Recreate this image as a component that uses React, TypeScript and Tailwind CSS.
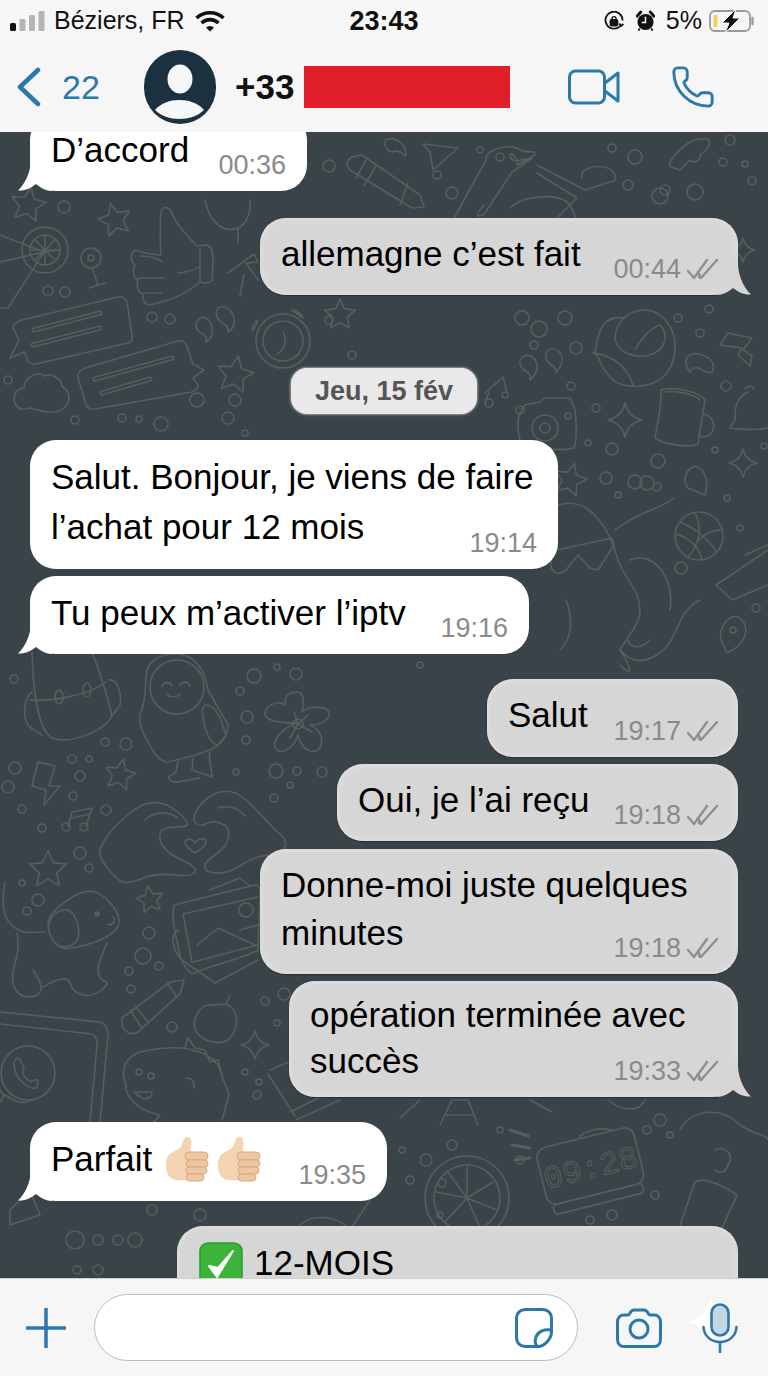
import type { ReactNode } from 'react'
import { Phone } from 'lucide-react'

function starPoints(cx: number, cy: number, r: number, rot = 0) {
  const pts: string[] = []
  for (let i = 0; i < 10; i++) {
    const rad = i % 2 === 0 ? r : r * 0.48
    const a = ((rot - 90 + i * 36) * Math.PI) / 180
    pts.push(`${(cx + rad * Math.cos(a)).toFixed(1)},${(cy + rad * Math.sin(a)).toFixed(1)}`)
  }
  return pts.join(' ')
}

function sparkle(cx: number, cy: number, r: number) {
  const s = r * 0.18
  return `M${cx} ${cy - r}Q${cx + s} ${cy - s} ${cx + r} ${cy}Q${cx + s} ${cy + s} ${cx} ${cy + r}Q${cx - s} ${cy + s} ${cx - r} ${cy}Q${cx - s} ${cy - s} ${cx} ${cy - r}Z`
}

// rounds a list of points off through their midpoints
function smooth(pts: number[][], closed = false) {
  const mid = (a: number[], b: number[]) => `${(a[0] + b[0]) / 2} ${(a[1] + b[1]) / 2}`
  if (closed) {
    let d = `M${mid(pts[pts.length - 1], pts[0])}`
    pts.forEach((p, i) => {
      d += `Q${p[0]} ${p[1]} ${mid(p, pts[(i + 1) % pts.length])}`
    })
    return d + 'Z'
  }
  let d = `M${pts[0][0]} ${pts[0][1]}`
  for (let i = 1; i < pts.length - 1; i++) d += `Q${pts[i][0]} ${pts[i][1]} ${mid(pts[i], pts[i + 1])}`
  const last = pts[pts.length - 1]
  return d + `L${last[0]} ${last[1]}`
}

const LEFT_HAND = [[98, 850], [113, 827], [143, 802], [167, 803], [187, 820], [188, 827], [163, 827], [158, 838], [167, 853], [197, 867], [193, 877], [157, 873], [133, 882], [120, 883], [103, 863]]
const RIGHT_HAND = [[192, 820], [200, 803], [220, 790], [240, 793], [263, 817], [275, 830], [287, 840], [283, 853], [253, 857], [230, 873], [207, 873], [203, 863], [227, 847], [230, 827], [213, 820], [200, 827]]
const DOG_HEAD = [[57, 907], [83, 890], [103, 893], [123, 920], [110, 937], [80, 947], [57, 950], [45, 923]]
const DOG_EAR = [[55, 912], [70, 908], [80, 927], [77, 945], [57, 948], [46, 927]]
const DOG_BODY = [[5, 882], [0, 910], [17, 933], [45, 932]]
const DOG_BACK = [[17, 933], [20, 947], [10, 980], [20, 997], [37, 997], [43, 987], [33, 970]]
const DOG_FRONT = [[43, 987], [67, 973], [73, 993], [93, 997], [110, 983], [100, 980], [97, 967], [107, 943]]

const STARS: [number, number, number, number][] = [
  [28, 205, 18, 10], [115, 220, 17, -15], [235, 375, 19, 10], [340, 315, 16, 0], [570, 480, 17, 15],
  [120, 775, 16, 12], [48, 870, 19, 0], [150, 900, 14, -10],
]

const SPARKLES: [number, number, number][] = [
  [625, 420, 17], [743, 463, 14], [255, 1045, 14], [743, 250, 12],
]

// loose little bubbles scattered between the doodles
const DOTS: [number, number, number][] = [
  [64, 207, 6], [48, 291, 5], [65, 292, 5], [152, 317, 5], [170, 319, 5], [329, 320, 4], [352, 355, 4], [8, 380, 4],
  [197, 400, 7], [235, 400, 6], [228, 418, 6], [245, 433, 3], [122, 418, 4], [139, 419, 3], [75, 420, 4], [161, 424, 7],
  [14, 679, 4], [254, 676, 7], [240, 691, 4], [277, 667, 3], [296, 674, 6], [247, 717, 6], [246, 740, 4], [105, 742, 4],
  [126, 744, 6], [89, 759, 3], [72, 759, 4], [15, 768, 6], [8, 787, 6], [80, 776, 5], [73, 796, 4], [106, 810, 5], [42, 828, 4],
  [22, 809, 4], [80, 853, 6], [89, 868, 4], [22, 883, 3], [38, 900, 6], [27, 911, 4], [149, 933, 6], [143, 956, 8],
  [129, 971, 4], [159, 966, 4], [131, 989, 4], [172, 1027, 5], [265, 1001, 4], [284, 994, 6], [277, 1023, 3], [245, 1072, 3],
  [259, 1082, 3], [257, 1095, 4], [236, 772, 3], [276, 771, 7], [297, 771, 4], [322, 772, 5], [290, 785, 3], [274, 798, 4],
  [522, 318, 7], [539, 329, 8], [534, 345, 4], [565, 318, 7], [576, 348, 6], [678, 318, 4], [709, 309, 4], [700, 333, 4],
  [571, 386, 4], [520, 410, 4], [596, 408, 4], [588, 443, 3], [612, 449, 6], [658, 461, 7], [647, 483, 7], [606, 478, 6],
  [635, 482, 7], [657, 487, 4], [618, 495, 3], [726, 386, 5], [715, 450, 3], [764, 446, 3], [727, 498, 3], [740, 528, 3],
  [681, 568, 6], [756, 608, 4], [420, 665, 3], [730, 140, 5], [612, 148, 4], [635, 157, 7], [665, 190, 5], [628, 185, 5],
  [723, 162, 4], [745, 164, 3], [752, 181, 4], [329, 166, 6], [437, 175, 4], [480, 150, 3], [500, 157, 4], [452, 193, 6],
  [660, 196, 8], [695, 192, 8], [442, 1183, 4], [402, 1150, 3], [410, 1180, 4], [426, 1160, 6], [452, 1145, 5], [440, 1215, 3],
  [500, 1130, 3], [520, 1160, 4], [660, 1120, 6], [647, 1130, 4], [670, 1135, 3], [655, 1195, 4], [590, 1220, 4], [612, 1215, 5],
  [75, 1240, 9], [98, 1240, 5], [118, 1240, 5], [135, 1240, 7], [152, 1210, 5], [77, 1270, 4], [98, 1270, 5], [200, 1215, 6],
]

function Doodles() {
  return (
    <svg viewBox="0 132 768 1146" className="absolute inset-0 h-full w-full" fill="none" stroke="#565e61" strokeWidth="1.6" strokeLinecap="round" strokeLinejoin="round">
      {DOTS.map(([x, y, r], i) => <circle key={i} cx={x} cy={y} r={r} />)}
      {STARS.map(([x, y, r, rot], i) => <polygon key={i} points={starPoints(x, y, r, rot)} />)}
      {SPARKLES.map(([x, y, r], i) => <path key={i} d={sparkle(x, y, r)} />)}

      {/* drink */}
      <path d="M0 235L44 252L0 262M44 252L8 308H0M44 252L60 250" />
      <circle cx="45" cy="250" r="23" /><circle cx="45" cy="250" r="15" />
      <path d="M30 250H60M45 235V265M35 240L55 260M55 240L35 260" />
      {/* wine glass */}
      <circle cx="91" cy="258" r="10" /><circle cx="91" cy="258" r="3" /><path d="M92 268L98 285M89 288L105 283" />
      {/* mic stand */}
      <path d="M205 200C210 225 225 233 238 228C247 224 251 212 250 200M238 228L238 243" />
      {/* thumb */}
      <path d="M161 212C162 205 170 207 172 213C176 226 190 238 197 246L207 245C212 246 213 252 213 262L212 280C210 284 204 283 200 282C190 290 178 298 165 301L150 305C143 305 143 298 143 294C137 292 136 284 138 280C133 278 132 270 135 265C130 260 130 255 135 250C140 252 155 255 161 255C160 250 160 220 161 212ZM200 248L200 282M178 273C188 272 195 270 200 266M140 256C148 256 158 258 162 262M138 278H164M144 293H162" />
      <path d="M228 273L254 254L258 262L246 263L258 280M244 274L240 296" />
      {/* chat bubbles */}
      <path d="M22 320L118 297C122 296 126 298 127 302L132 336C133 340 131 342 128 343L36 364C32 365 28 363 27 359L24 352L10 358L19 340L13 328C13 324 18 321 22 320Z" />
      <path d="M34 330L100 313M33 345L100 328" strokeWidth="5" />
      <path d="M34 330L100 313M33 345L100 328" strokeWidth="2" stroke="#3a4347" />
      <path d="M85 368L178 341C182 340 186 342 187 346L193 364L204 370L193 378L198 385C198 389 195 391 192 392L95 409C91 410 87 408 86 404L78 378C77 373 80 370 85 368Z" />
      <path d="M95 379L172 358M102 393L150 379" strokeWidth="5" />
      <path d="M95 379L172 358M102 393L150 379" strokeWidth="2" stroke="#3a4347" />
      {/* quotes */}
      <path d="M198 320C200 315 210 317 212 327C213 335 210 340 206 342C208 335 203 335 200 332C195 328 195 323 198 320ZM218 308C222 305 232 308 234 318C235 326 232 330 228 332C229 325 224 325 221 322C216 318 215 312 218 308Z" />
      <path d="M522 358C525 353 535 355 537 365C538 372 533 378 530 380C532 372 525 372 523 369C519 365 519 361 522 358ZM548 350C552 347 561 350 562 358C563 366 558 369 556 373C557 366 550 365 548 362C545 358 545 353 548 350Z" />
      {/* clock */}
      <circle cx="283" cy="341" r="27" /><circle cx="283" cy="341" r="20" />
      <path d="M283 332C287 340 286 348 277 354M256 325L253 331C251 327 254 322 258 320ZM292 310C297 311 301 313 303 318Z" />
      {/* cloud */}
      <path d="M24 388C24 378 38 370 44 376C52 372 62 380 62 386C70 392 72 400 64 408C56 416 38 410 30 408C20 412 14 406 14 398C14 392 20 388 24 388Z" />
      {/* pencil top */}
      <path d="M352 157L362 155L420 195L424 207L412 208L350 170C345 165 347 160 352 157ZM366 160L356 178M376 166L364 186M408 183L400 205" />
      {/* arrow */}
      <path d="M423 144L458 148L433 170L430 152Z" />
      <path d="M385 145C382 138 394 136 402 144C406 148 407 155 405 156C403 152 396 150 392 152C388 152 386 148 385 145Z" />
      {/* bike */}
      <path d="M510 208C523 195 560 192 570 205C577 218 578 224 578 240M453 220L486 160C484 150 510 142 520 150C530 155 535 148 535 155L517 165C518 158 510 150 510 156C512 165 525 158 532 158L512 172L485 213C480 218 472 218 484 205M537 165L585 190L610 182C620 182 615 170 605 167C590 165 580 170 582 178M537 173L577 198L549 226" />
      {/* key */}
      <path d="M670 162C680 145 700 135 702 140C710 135 715 145 700 155C702 158 695 165 690 160L680 170C676 168 668 168 670 162Z" />
      {/* backpack */}
      <path d="M32 652C33 690 38 730 52 738C72 745 105 730 112 716C106 690 97 665 92 652" />
      <path d="M32 692C24 698 22 715 28 725C32 730 38 732 42 735M108 680C118 678 122 695 120 705L112 716M30 700C50 702 90 695 106 682" />
      <ellipse cx="59" cy="697" rx="4" ry="7" /><ellipse cx="87" cy="690" rx="4" ry="7" />
      {/* astronaut */}
      <path d="M146 680C145 660 160 654 176 654C195 654 205 670 208 690L228 725C228 745 210 750 196 755L168 762C158 762 152 750 147 740C140 730 138 715 142 710C146 695 145 690 146 680Z" />
      <circle cx="177" cy="687" r="27" />
      <path d="M162 686C165 681 170 682 172 686M180 685C183 681 188 681 190 686M167 694C170 698 176 698 180 694M205 705C215 705 220 715 226 735L218 745C210 745 205 730 203 718C202 710 202 707 205 705ZM178 762L176 772L172 775C165 776 170 783 178 782L200 778M193 758L192 770L212 777C210 755 208 760 210 752" />
      {/* flower */}
      <path d="M297 722C284 725 266 720 265 715C264 705 278 700 285 705C284 695 290 692 297 692C305 692 304 705 302 712C310 705 328 706 329 713C329 722 318 725 310 725C322 730 325 742 318 750C308 755 300 745 298 735C295 745 285 755 277 750C270 742 280 730 297 722Z" />
      <circle cx="298" cy="724" r="5" /><path d="M294 712L298 724M308 715L298 724M312 732L298 724M290 738L298 724M284 722L298 724" />
      {/* bolt */}
      <path d="M38 762L55 766L49 786L60 786L44 805L46 790L32 786Z" />
      <path d="M728 333L752 338L743 350L752 356L750 366L738 355L742 348L720 345Z" />
      {/* music */}
      <path d="M72 812L92 808L86 826M72 812L68 826M72 818L90 814" />
      <circle cx="66" cy="827" r="4" /><circle cx="84" cy="827" r="4" />
      <path d="M485 393L503 377L507 392M489 392L485 403" /><circle cx="489" cy="403" r="4" /><circle cx="505" cy="395" r="3" />
      {/* heart hands */}
      <path d={smooth(LEFT_HAND, true)} />
      <path d={smooth(RIGHT_HAND, true)} />
      <path d="M145 820C155 810 170 812 178 818M218 808C228 805 238 808 245 816" />
      <path d="M195 843C190 836 185 840 185 843C186 847 191 850 195 853C200 850 206 846 206 842C206 838 199 837 195 843Z" />
      {/* dog */}
      <path d={smooth(DOG_HEAD, true)} />
      <path d={smooth(DOG_EAR, true)} />
      <path d={smooth(DOG_BODY)} />
      <path d={smooth(DOG_BACK)} />
      <path d={smooth(DOG_FRONT)} />
      <path d="M108 925C114 925 116 920 113 917" />
      <circle cx="97" cy="914" r="2" fill="#565e61" />
      {/* photo */}
      <path d="M174 905L255 885C258 885 260 888 260 892L258 950C240 960 210 965 195 973C190 975 180 965 178 945C174 930 172 915 174 905ZM183 914L258 897M193 962L258 945M183 914L192 962M197 945L218 928L255 945M240 930L258 925M178 930C170 935 172 950 182 960L215 983L258 960M210 890L240 878L250 886" />
      <circle cx="246" cy="910" r="7" />
      {/* crayon */}
      <path d="M122 1018L170 982L184 980L180 994L138 1032C132 1036 125 1032 122 1026ZM130 1010L142 1028M135 1006L148 1022M168 984L176 996" />
      {/* apple */}
      <path d="M208 1005C196 1008 190 1025 198 1034C204 1042 220 1045 228 1040C238 1030 240 1015 230 1006C222 1002 216 1006 208 1005ZM226 1004L230 996" />
      {/* whatsapp tablet */}
      <path d="M0 1012L100 1022C106 1024 108 1028 108 1035L100 1122M0 1024L92 1034C97 1036 97 1042 97 1045L90 1122" />
      <circle cx="28" cy="1073" r="27" /><path d="M0 1090L4 1096L0 1102M5 1095C15 1102 26 1105 30 1100" />
      <path d="M14 1064C14 1058 20 1057 20 1060L24 1068C22 1072 22 1075 28 1080C34 1084 36 1078 38 1080L37 1088C30 1090 14 1080 14 1064Z" />
      {/* dino */}
      <path d="M126 1085C118 1065 130 1052 150 1050C178 1045 205 1048 218 1065L229 1095L222 1120M126 1085C125 1095 135 1110 160 1115C155 1122 150 1125 145 1125M185 1048L188 1038L195 1048L205 1050L210 1062L218 1060L222 1075M134 1092H152C152 1098 146 1100 142 1098Z" />
      <circle cx="139" cy="1072" r="3" /><circle cx="151" cy="1076" r="3" /><path d="M186 1078C192 1078 195 1082 194 1088" />
      {/* book corner */}
      <path d="M270 1070L305 1055M268 1074L295 1116M290 1112L335 1090M296 1120L340 1100" />
      {/* duck */}
      <path d="M595 355C598 320 610 316 625 318M615 340C615 320 630 310 645 310C662 310 675 328 675 345C676 370 660 385 640 386C620 388 608 382 597 355L592 352C605 355 625 360 633 385M615 340C620 356 640 358 650 355C665 350 670 335 660 325C650 328 640 340 635 350" />
      {/* swirl */}
      <path d="M690 372C680 358 690 352 700 354C712 358 716 365 712 372C705 375 700 366 695 368C692 368 690 372 690 372Z" />
      {/* camera */}
      <path d="M525 405L540 402L545 398H570L575 410C576 420 577 440 574 448C560 452 530 448 520 440C516 425 518 412 525 405Z" />
      <circle cx="545" cy="428" r="13" /><circle cx="545" cy="428" r="5" /><circle cx="568" cy="416" r="3" />
      {/* mug */}
      <path d="M661 390C675 386 700 392 705 400L698 444C690 448 665 445 655 438C658 420 662 405 661 390ZM665 392C675 390 695 394 700 400M703 414C712 415 716 425 712 432C708 438 700 438 699 434" />
      {/* bell */}
      <path d="M748 392C735 398 735 410 735 420L730 428C742 430 760 430 768 428M745 389C748 385 752 385 754 389" />
      {/* pin */}
      <path d="M695 466C685 470 682 480 688 488L705 495C708 485 708 470 695 466Z" />
      <path d="M732 617C722 622 718 635 722 642L727 653C738 648 745 640 746 630C745 620 738 615 732 617Z" /><circle cx="733" cy="630" r="3" />
      {/* basketball */}
      <circle cx="699" cy="536" r="24" />
      <path d="M680 522C695 528 710 540 716 552M695 513C702 525 700 545 688 557M676 534C690 538 700 548 702 560M722 530C712 530 702 535 695 545" />
      {/* octopus + glasses */}
      <path d="M558 505C590 495 610 530 618 560C625 580 640 590 640 610C640 625 625 640 620 650C635 668 655 660 668 645C680 628 680 610 700 600M615 530C640 510 660 510 674 498M620 650C630 665 635 680 620 665M566 600C575 625 570 640 560 650M630 560C655 550 675 580 670 610M650 640C640 650 630 648 628 640" />
      <path d="M548 552L612 538L614 545L598 570L590 568L578 555L566 570C555 578 548 570 552 555Z" />
      {/* shoe */}
      <path d="M716 585L768 550M716 585L732 600L768 585M745 555L768 545" />
      {/* gamepad + misc bottom */}
      <path d="M680 1130C690 1110 720 1105 740 1125C755 1135 768 1135 768 1140M715 1150C725 1145 735 1155 728 1165C725 1175 718 1172 715 1170" />
      {/* alarm clock */}
      <g transform="rotate(-14 590 1165)">
        <rect x="540" y="1137" width="100" height="58" rx="10" /><rect x="544" y="1195" width="92" height="10" rx="4" />
        <path d="M585 1137C590 1130 610 1130 620 1137" />
        <text x="590" y="1178" textAnchor="middle" fontFamily="Liberation Mono, monospace" fontSize="32" fill="none" stroke="#565e61" strokeWidth="1">09:28</text>
      </g>
      <path d="M510 1130L528 1136M512 1145L530 1148M515 1160L530 1158" strokeWidth="3" />
      {/* lemon */}
      <circle cx="467" cy="1198" r="42" /><circle cx="467" cy="1198" r="33" />
      <path d="M467 1198V1167M467 1198L493 1182M467 1198L497 1210M467 1198L480 1228M467 1198L445 1222M467 1198L436 1192M467 1198L448 1172" />
      {/* mug bottom */}
      <path d="M695 1182C705 1175 730 1190 737 1195L722 1228M695 1182L680 1225C690 1235 710 1240 722 1228" />
      {/* eiffel */}
      <path d="M452 1100L440 1125M452 1100L468 1100L478 1125M446 1115H474" />
      <path d="M400 1118L420 1100M530 1100L552 1112M608 1100C622 1112 640 1112 645 1100" />
      <path d="M270 1200L285 1150C300 1130 330 1140 340 1160M350 1230L370 1200M290 1240C300 1210 340 1210 360 1240M10 1210L30 1190L40 1215L10 1225Z" />
    </svg>
  )
}

function DoubleCheck() {
  return (
    <svg viewBox="0 0 32 22" className="ml-[6px] h-[22px] w-[32px]" fill="none" stroke="#8f8f8f" strokeWidth="2.4" strokeLinecap="round" strokeLinejoin="round">
      <path d="M1 13L7 20L20 2M12 19L14 20L30 2M11 14L14 20" />
    </svg>
  )
}

function Tail({ side }: { side: 'in' | 'out' }) {
  const fill = side === 'in' ? 'fill-white' : 'fill-[#d6d6d6]'
  return (
    <svg
      viewBox="0 0 34 36"
      className={`absolute bottom-0 h-[36px] w-[34px] ${fill} ${side === 'in' ? 'left-[-12px]' : 'right-[-13px] -scale-x-100'}`}
    >
      <path d="M13 0C14 14 8 28 0 35.500C7 36 13 33 18 29C23 33 28 36 34 36V0Z" />
    </svg>
  )
}

interface BubbleProps {
  side: 'in' | 'out'
  width: string
  spacing: string
  time: string
  tail?: boolean
  box?: string
  children: ReactNode
}

function Bubble({ side, width, spacing, time, tail, box = 'pt-[13px] pb-[18px] leading-[46px]', children }: BubbleProps) {
  const out = side === 'out'
  return (
    <div
      className={`relative shrink-0 rounded-[26px] pl-[21px] text-[35px] text-black ${box} ${width} ${spacing} ${
        out ? 'self-end bg-[#d6d6d6] shadow-[inset_0_0_6px_#e6e6e6,0_1px_1px_#2a3033]' : 'self-start bg-white'
      }`}
    >
      {tail && <Tail side={side} />}
      <div className="relative">{children}</div>
      <div className={`absolute bottom-[9px] flex items-center text-[27px] leading-[34px] text-[#8a8a8a] ${out ? 'right-[19px]' : 'right-[21px]'}`}>
        {time}
        {out && <DoubleCheck />}
      </div>
    </div>
  )
}

function ThumbEmoji() {
  return (
    <svg viewBox="0 0 44 46" className="h-[46px] w-[44px]">
      <path d="M21 1C26 0 27 5 26 10C25 14 26 16 28 17L30 42C20 45 8 46 4 40C0 34 0 26 3 20C5 17 12 14 15 12C18 8 18 3 21 1Z" fill="#f3d3b1" />
      <rect x="20" y="16" width="23" height="8" rx="4" fill="#ecc7a1" stroke="#d8a97e" strokeWidth="1" />
      <rect x="21" y="24" width="22" height="7" rx="3.500" fill="#ecc7a1" stroke="#d8a97e" strokeWidth="1" />
      <rect x="21" y="31" width="21" height="7" rx="3.500" fill="#ecc7a1" stroke="#d8a97e" strokeWidth="1" />
      <rect x="21" y="38" width="18" height="7" rx="3.500" fill="#ecc7a1" stroke="#d8a97e" strokeWidth="1" />
    </svg>
  )
}

function StatusBar() {
  return (
    <div className="grid h-[42px] grid-cols-3 items-center text-[25px] text-[#111]">
      <div className="flex items-center pl-[10px]">
        <svg viewBox="0 0 35 20" className="h-[20px] w-[35px]">
          <rect x="0" y="12" width="6" height="8" rx="1.500" fill="#111" />
          <rect x="9.500" y="8" width="6" height="12" rx="1.500" fill="#b5b5b5" />
          <rect x="19" y="4" width="6" height="16" rx="1.500" fill="#b5b5b5" />
          <rect x="28.500" y="0" width="6" height="20" rx="1.500" fill="#b5b5b5" />
        </svg>
        <span className="ml-[9px]">Béziers, FR</span>
        <svg viewBox="0 0 30 22" className="ml-[10px] h-[22px] w-[30px]" fill="none" stroke="#111" strokeWidth="3.600" strokeLinecap="butt">
          <path d="M1.500 8C9 1 21 1 28.500 8M6.500 13C11.500 8.500 18.500 8.500 23.500 13" />
          <path d="M11 17.500C13.500 15.500 16.500 15.500 19 17.500L15 21.500Z" fill="#111" stroke="none" />
        </svg>
      </div>
      <div className="text-center text-[27px] font-bold">23:43</div>
      <div className="flex items-center justify-end pr-[13px]">
        <svg viewBox="0 0 20 20" className="h-[20px] w-[20px]" fill="none" stroke="#111" strokeWidth="1.800">
          <path d="M17 14A8.500 8.500 0 1 1 18.500 9.500" />
          <path d="M15.500 12.500L17 15L19.500 13" />
          <rect x="6.500" y="9" width="7" height="5.500" rx="1" fill="#111" />
          <path d="M8 9V7.500C8 5 12 5 12 7.500V9" strokeWidth="1.400" />
        </svg>
        <svg viewBox="0 0 20 22" className="ml-[12px] h-[22px] w-[19px]">
          <circle cx="10" cy="12" r="8.500" fill="#111" />
          <path d="M1 6L5 1.500M19 6L15 1.500" stroke="#111" strokeWidth="3" strokeLinecap="round" />
          <path d="M10 6.500V12.500H6" stroke="#f6f6f6" strokeWidth="1.600" fill="none" />
          <path d="M4 19L2.500 21M16 19L17.500 21" stroke="#111" strokeWidth="2" />
        </svg>
        <span className="ml-[11px]">5%</span>
        <svg viewBox="0 0 46 24" className="ml-[7px] h-[24px] w-[46px]" fill="none">
          <rect x="1" y="2" width="40" height="20" rx="5" stroke="#9a9a9a" strokeWidth="1.800" />
          <rect x="4.500" y="6" width="4" height="12" rx="1" fill="#f2d060" />
          <path d="M43.500 9V15" stroke="#9a9a9a" strokeWidth="2.400" strokeLinecap="round" />
          <path d="M27 0L13 14H20L16 24L31 9H24Z" fill="#111" stroke="#f6f6f6" strokeWidth="1" />
        </svg>
      </div>
    </div>
  )
}

function NavBar() {
  return (
    <div className="flex h-[90px] items-center pl-[17px]">
      <svg viewBox="0 0 24 40" className="h-[40px] w-[24px]" fill="none" stroke="#2a79ab" strokeWidth="4.500" strokeLinecap="round" strokeLinejoin="round">
        <path d="M21 3L3 20L21 37" />
      </svg>
      <span className="ml-[21px] w-[38px] text-[34px] text-[#2a79ab]">22</span>
      <div className="ml-[44px] h-[74px] w-[72px] overflow-hidden rounded-full bg-[#1c3140]">
        <svg viewBox="0 0 72 74" className="h-full w-full" fill="#f4f6f7">
          <ellipse cx="36" cy="29" rx="12.500" ry="14.500" />
          <path d="M11 60C17 53 26 50 35 50C45 50 54 53 60 60C54 66 45 69 35 69C26 69 17 66 11 60Z" />
        </svg>
      </div>
      <span className="ml-[19px] w-[61px] text-[35px] font-bold text-[#111]">+33</span>
      <div className="ml-[8px] h-[42px] w-[206px] bg-[#e11f28]" />
      <svg viewBox="0 0 52 36" className="ml-[58px] h-[36px] w-[52px]" fill="none" stroke="#2a79ab" strokeWidth="3" strokeLinejoin="round">
        <rect x="1.500" y="2" width="35" height="32" rx="6" />
        <path d="M37 14L50 4V32L37 22" />
      </svg>
      <Phone className="ml-[50px] h-[46px] w-[46px] text-[#2a79ab]" strokeWidth={1.500} />
    </div>
  )
}

function Composer() {
  return (
    <div className="flex h-[98px] shrink-0 items-center border-t border-[#cfcfcf] bg-[#f6f6f6] pl-[26px]">
      <svg viewBox="0 0 40 40" className="h-[40px] w-[40px]" stroke="#2a79ab" strokeWidth="3.500" strokeLinecap="round">
        <path d="M20 1V39M1 20H39" />
      </svg>
      <div className="ml-[28px] flex h-[67px] w-[484px] items-center justify-end rounded-full border border-[#bdbdbd] bg-white pr-[24px]">
        <svg viewBox="0 0 38 40" className="h-[40px] w-[38px]" fill="none" stroke="#2a79ab" strokeWidth="3" strokeLinejoin="round">
          <path d="M11 1.500H27C33 1.500 36.500 5 36.500 11V24C36.500 30 30 38.500 23 38.500H11C5 38.500 1.500 35 1.500 29V11C1.500 5 5 1.500 11 1.500Z" />
          <path d="M36 22C30 21 23 23 21 29C20 32 20 36 22 38" />
        </svg>
      </div>
      <svg viewBox="0 0 46 40" className="ml-[38px] h-[40px] w-[46px]" fill="none" stroke="#2a79ab" strokeWidth="3">
        <path d="M8 7H12C14 7 14 2 18 2H28C32 2 32 7 34 7H38C42 7 44.500 10 44.500 14V31C44.500 35.500 42 38.500 38 38.500H8C4 38.500 1.500 35.500 1.500 31V14C1.500 10 4 7 8 7Z" />
        <circle cx="23" cy="21" r="9" />
      </svg>
      <div className="relative ml-[40px] h-[50px] w-[36px]">
        <svg viewBox="0 0 50 50" className="absolute left-[-16px] top-[-6px] h-[50px] w-[50px]" fill="#ffffff">
          <path d={sparkle(25, 25, 24)} />
        </svg>
        <svg viewBox="0 0 36 50" className="absolute inset-0 h-[50px] w-[36px]" fill="none" stroke="#2a79ab" strokeWidth="2.600" strokeLinecap="round">
          <rect x="9.500" y="1.500" width="17" height="31" rx="8.500" fill="#c3d7e5" />
          <path d="M1.500 24C2 33 9 39 18 39C27 39 34 33 34.500 24M18 39V49" />
        </svg>
      </div>
    </div>
  )
}

export default function App() {
  return (
    <div className="flex h-[1376px] w-[768px] flex-col overflow-hidden bg-[#f6f6f6] font-['Liberation_Sans',Arial,sans-serif]">
      <div className="shrink-0 bg-[#f6f6f6]">
        <StatusBar />
        <NavBar />
      </div>

      <div className="relative flex min-h-0 flex-1 flex-col overflow-hidden bg-[#3a4347] px-[30px]">
        <Doodles />
        <Bubble side="in" width="w-[277px]" spacing="mt-[-18px]" time="00:36" tail>D’accord</Bubble>
        <Bubble side="out" width="w-[478px]" spacing="mt-[27px]" time="00:44" tail>allemagne c’est fait</Bubble>
        <div className="relative mt-[73px] flex h-[46px] w-[186px] shrink-0 items-center justify-center self-center rounded-[16px] bg-[#e9e9e9] text-[27px] font-bold text-[#555] shadow-[0_0_3px_#f0f0f0]">
          Jeu, 15 fév
        </div>
        <Bubble side="in" width="w-[528px]" spacing="mt-[26px]" time="19:14" box="pt-[12px] pb-[17px] leading-[50px]">
          Salut. Bonjour, je viens de faire<br />l’achat pour 12 mois
        </Bubble>
        <Bubble side="in" width="w-[499px]" spacing="mt-[7px]" time="19:16" tail box="pt-[13px] pb-[19px] leading-[46px]">
          <span className="relative top-[1px]">Tu peux m’activer l’iptv</span>
        </Bubble>
        <Bubble side="out" width="w-[251px]" spacing="mt-[25px]" time="19:17" box="pt-[13px] pb-[19px] leading-[46px]">Salut</Bubble>
        <Bubble side="out" width="w-[401px]" spacing="mt-[7px]" time="19:18">Oui, je l’ai reçu</Bubble>
        <Bubble side="out" width="w-[478px]" spacing="mt-[8px]" time="19:18" box="pt-[12px] pb-[17px] leading-[48px]">
          Donne-moi juste quelques<br />minutes
        </Bubble>
        <Bubble side="out" width="w-[449px]" spacing="mt-[7px]" time="19:33" tail box="pt-[11px] pb-[13px] leading-[46px]">
          opération terminée avec<br />succès
        </Bubble>
        <Bubble side="in" width="w-[357px]" spacing="mt-[25px]" time="19:35" tail>
          <div className="flex h-[48px] items-center">
            Parfait
            <span className="ml-[13px] flex gap-[8px]">
              <ThumbEmoji />
              <ThumbEmoji />
            </span>
          </div>
        </Bubble>
        <div className="relative mt-[25px] flex h-[100px] w-[561px] shrink-0 items-start gap-[11px] self-end rounded-[26px] bg-[#d6d6d6] pl-[22px] pt-[16px] text-[35px] leading-[42px] text-black shadow-[inset_0_0_6px_#e6e6e6]">
          <svg viewBox="0 0 44 44" className="h-[44px] w-[44px]">
            <rect x="1" y="1" width="42" height="42" rx="8" fill="#3cb43a" stroke="#2a9a2c" strokeWidth="1.500" />
            <path d="M10 24L18 35L34 9L19 26Z" fill="#fff" stroke="#fff" strokeWidth="2" strokeLinejoin="round" />
          </svg>
          12-MOIS
        </div>
      </div>

      <Composer />
    </div>
  )
}
